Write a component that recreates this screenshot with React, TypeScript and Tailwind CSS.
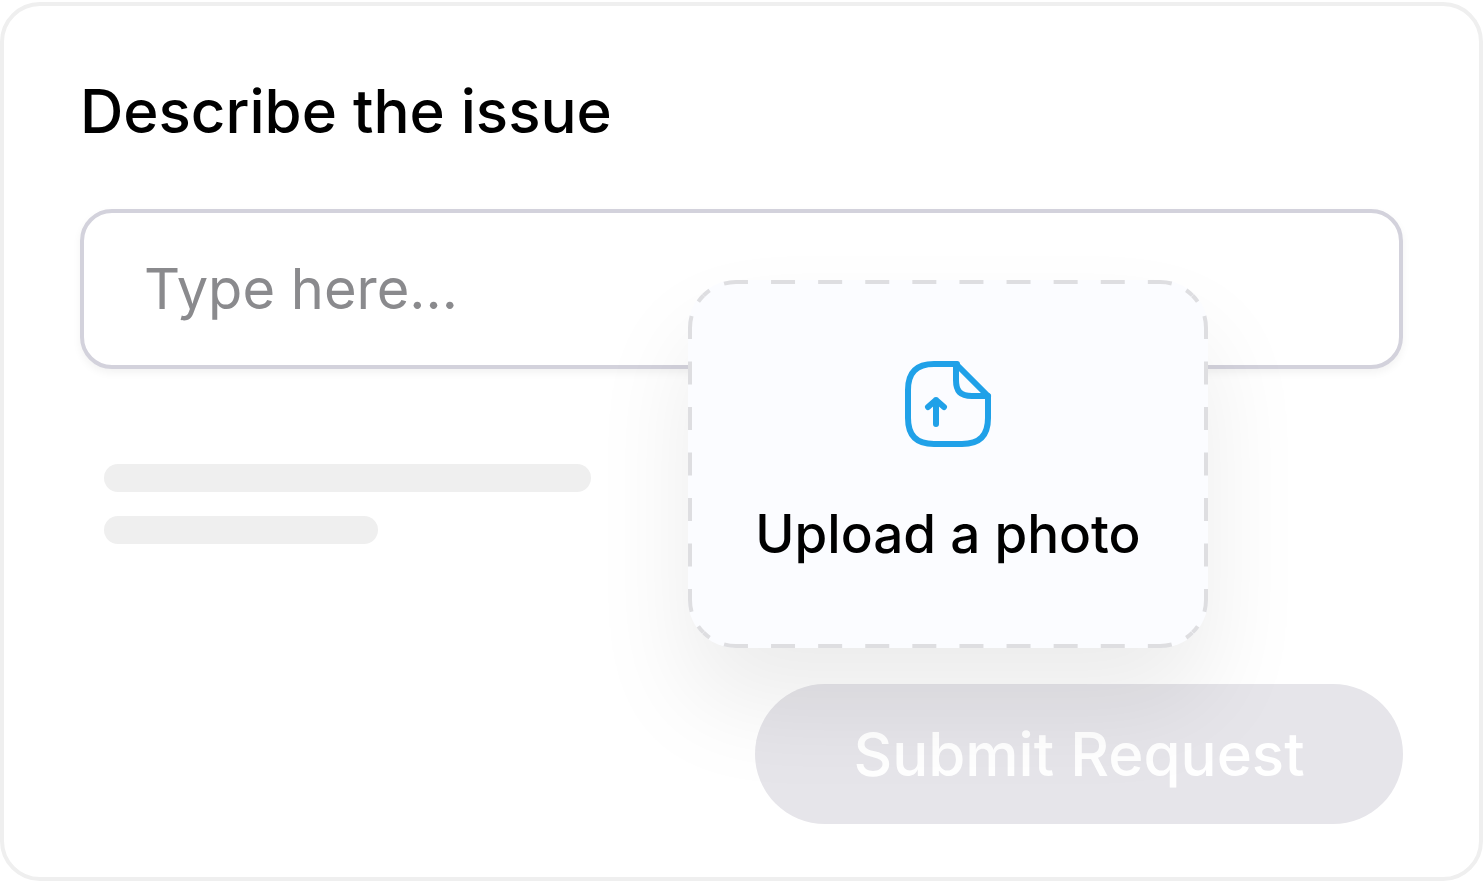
// src/App.tsx
import React from 'react';

const UploadIcon: React.FC = () => (
  <svg
    className="size-24"
    viewBox="0 0 96 96"
    fill="none"
    stroke="#20a1e8"
    strokeWidth="6"
    strokeLinecap="round"
    strokeLinejoin="round"
    aria-hidden="true"
  >
    <path d="M57 8H34C16 8 8 17 8 34V62C8 79 16 88 34 88H62C80 88 88 79 88 62V40" />
    <path d="M88 40H72C60 40 56 35 56 24V8L88 40Z" />
    <path d="M36 68V44M28 51L36 44L44 51" />
  </svg>
);

// Long dashes, with one centred on every corner
const DASHES_H = '8 16 24 23.1 24 23.1 24 23.1 24 23.1 24 23.1 24 23.1 24 23.1 24 23.1 24 23.1 24 16 8';
const DASHES_V = '8 16 23 22.5 23 22.5 23 22.5 23 22.5 23 22.5 23 22.5 23 16 8';

const DashedOutline: React.FC = () => (
  <svg
    className="absolute inset-0 size-full"
    viewBox="0 0 520 368"
    fill="none"
    stroke="#dedee1"
    strokeWidth="4"
    aria-hidden="true"
  >
    <path strokeDasharray={DASHES_H} d="M15.5 15.5A46 46 0 0 1 48 2H472A46 46 0 0 1 504.5 15.5" />
    <path strokeDasharray={DASHES_H} d="M15.5 352.5A46 46 0 0 0 48 366H472A46 46 0 0 0 504.5 352.5" />
    <path strokeDasharray={DASHES_V} d="M15.5 15.5A46 46 0 0 0 2 48V320A46 46 0 0 0 15.5 352.5" />
    <path strokeDasharray={DASHES_V} d="M504.5 15.5A46 46 0 0 1 518 48V320A46 46 0 0 1 504.5 352.5" />
  </svg>
);

const App: React.FC = () => {
  return (
    <main className="flex min-h-screen flex-col bg-white pt-[2px] font-['Inter',sans-serif]">
      <form
        className="relative flex grow flex-col rounded-[40px] border-4 border-[#efefef] px-[76px] pt-16 pb-[53px]"
        onSubmit={(e) => e.preventDefault()}
      >
        <label htmlFor="issue" className="text-[60px] leading-[83px] font-medium text-black">
          Describe the issue
        </label>
        <input
          id="issue"
          type="text"
          placeholder="Type here..."
          className="mt-14 h-40 w-full rounded-[32px] border-4 border-[#d3d2dc] bg-white px-[60px] text-[56px] text-black shadow-[0_4px_8px_rgba(0,0,0,0.05)] outline-none placeholder:text-[#8a8a8d]"
        />

        <div className="mt-[95px] ml-6 flex flex-col gap-6">
          <div className="h-7 w-[487px] rounded-full bg-[#efefef]" />
          <div className="h-7 w-[274px] rounded-full bg-[#efefef]" />
        </div>

        <button
          type="submit"
          className="mt-auto h-[140px] w-[648px] self-end rounded-full bg-[#e6e5ea] text-[60px] font-medium text-white"
        >
          Submit Request
        </button>

        <button
          type="button"
          className="absolute top-[274px] right-[271px] flex h-[368px] w-[520px] flex-col items-center rounded-[48px] bg-[#fbfcff] pt-[76px] shadow-[0_56px_100px_rgba(0,0,0,0.08)]"
        >
          <DashedOutline />
          <UploadIcon />
          <span className="mt-12 text-[53px] leading-[68px] font-medium text-black">Upload a photo</span>
        </button>
      </form>
    </main>
  );
};

export default App;
